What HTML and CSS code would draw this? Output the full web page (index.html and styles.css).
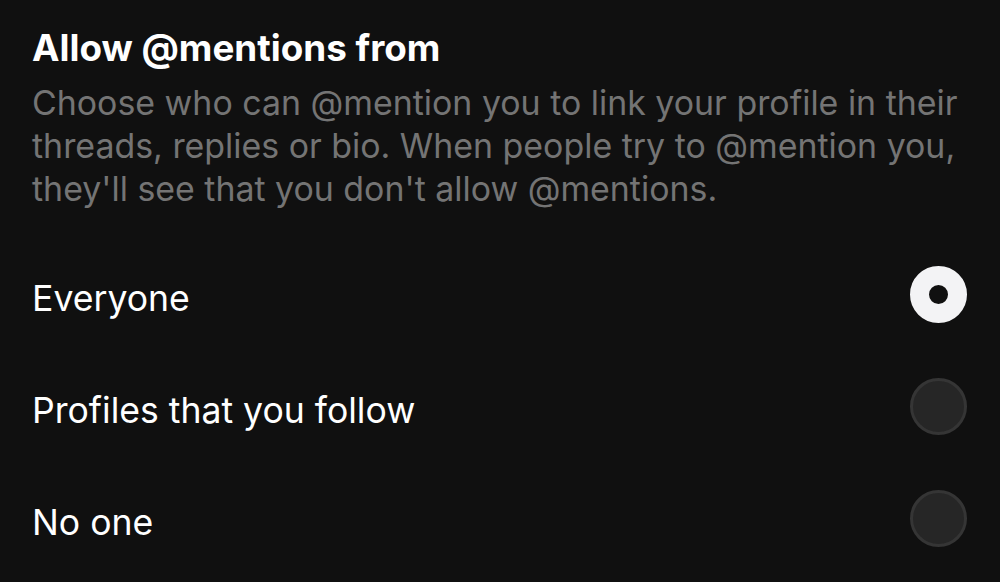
FILE: index.html
```html
<!DOCTYPE html>
<html lang="en">
<head>
<meta charset="UTF-8">
<meta name="viewport" content="width=device-width, initial-scale=1.0">
<title>Allow @mentions from</title>
<link rel="stylesheet" href="styles.css">
</head>
<body>

<div id="mentions-container">
    <div class="header">
        <h1>Allow @mentions from</h1>
        <p>Choose who can @mention you to link your profile in their threads, replies or bio. When people try to @mention you, they'll see that you don't allow @mentions.</p>
    </div>

    <ul class="option-list">
        <li class="option">
            <span class="label">Everyone</span>
            <span class="radio selected"></span>
        </li>
        <li class="option">
            <span class="label">Profiles that you follow</span>
            <span class="radio"></span>
        </li>
        <li class="option">
            <span class="label">No one</span>
            <span class="radio"></span>
        </li>
    </ul>
</div>

</body>
</html>
```

FILE: styles.css
```css
body {
    font-family: Inter, 'Noto Sans', sans-serif;
    margin: 0;
    padding: 0;
    background-color: #101010;
    color: #fff;
}

#mentions-container {
    padding: 0 33px 0 32px;
}

.header h1 {
    margin: 0;
    padding-top: 26px;
    font-size: 36.8px;
    line-height: 44px;
    font-weight: 700;
}

.header p {
    margin: 11px 0 0;
    font-size: 33.9px;
    line-height: 43px;
    color: #747474;
}

.option-list {
    list-style-type: none;
    margin: 0;
    padding: 0;
    padding-top: 28px;
}

.option {
    display: flex;
    align-items: center;
    justify-content: space-between;
    height: 112px;
    font-size: 35.6px;
}

.label {
    padding-top: 8px;
}

.radio {
    width: 57px;
    height: 57px;
    box-sizing: border-box;
    border-radius: 50%;
    border: 3px solid #353535;
    background-color: #262626;
}

.radio.selected {
    border: 19px solid #f3f3f5;
    background-color: #101010;
}
```
